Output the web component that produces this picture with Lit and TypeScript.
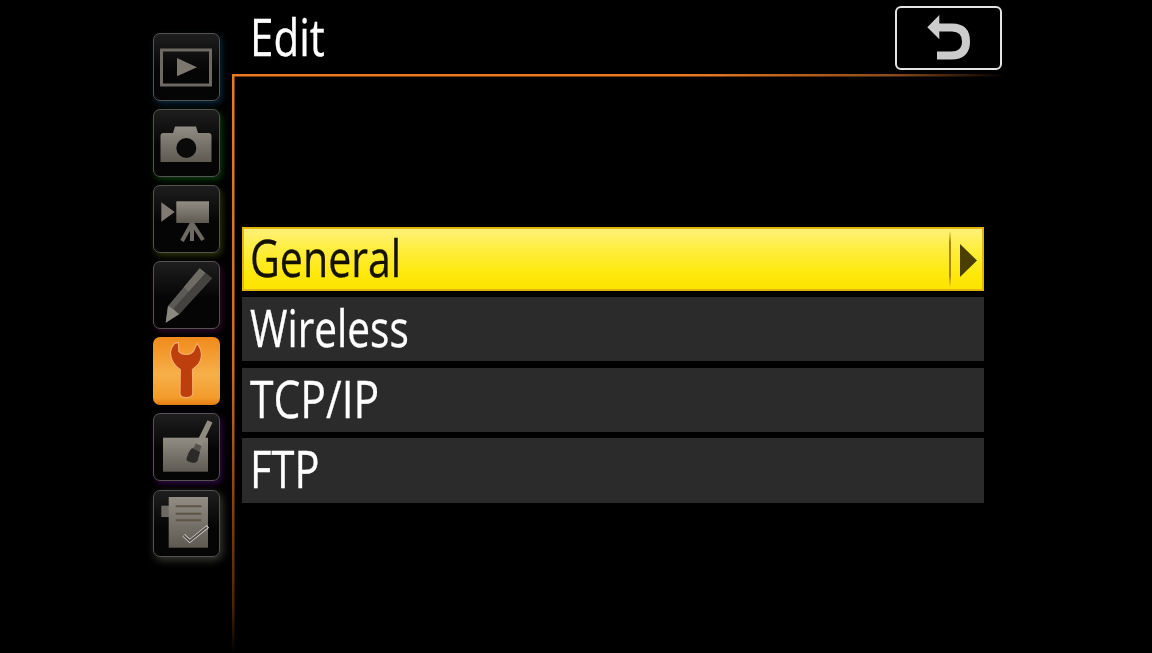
import { LitElement, html, css, svg } from "lit";
import { customElement } from "lit/decorators.js";

const G = "url(#g)";
const ICONS = [
  { cls: "blue", art: svg`<rect x="8.500" y="17" width="49" height="35" fill="none" stroke="#6e6a63" stroke-width="3"/><path d="M24 25 44 34.300 24 43.300Z" fill="#7c7870"/>` },
  { cls: "green", art: svg`<path d="M7.500 27a3 3 0 0 1 3-3H20l2-6.500h21l2 6.500h10.500a3 3 0 0 1 3 3V53H7.500Z" fill="${G}"/><circle cx="33.300" cy="39" r="10" fill="#0a0a0a"/>` },
  { cls: "olive", art: svg`<path d="M8.300 17.300 21.700 27 8.300 36.700Z" fill="#7f7b74"/><rect x="23.300" y="16.300" width="32.700" height="21.700" fill="${G}"/><path d="M39 38 29 56M39 38V56M39 38 50 55" stroke="#6e6a63" stroke-width="4" fill="none"/>` },
  { cls: "plum", art: svg`<path d="M12.700 61.700 15 45 46.700 7.300 59 17.300 26 53.300Z" fill="#5c5a56"/><path d="M31 26 46.700 7.300 52.500 12 36 31Z" fill="#6f6c66"/><path d="M20 48 52.500 12 59 17.300 26 53.300Z" fill="#45433f"/><path d="M12.700 61.700 15 45 20 48 26 53.300Z" fill="#8b8880"/>` },
  { cls: "active", art: svg`<path d="M21.700 6.300Q17.500 11 17.500 16 18 24 23.300 29.500L27.300 32.500 27 56.500Q27.200 60.500 33 60.700 39.500 60.500 39.800 56.500L39.500 32.500 43 29.500Q48.500 25 48.500 17 48 11 44 6.300L40.500 14.200Q38 17.500 33.300 17.500 28 17.500 25.800 14.200L25.500 5.500Z" fill="#bd3f0e" stroke="#f7ad6a" stroke-width="1.200"/>` },
  { cls: "purple", art: svg`<rect x="10" y="24.700" width="45" height="34" fill="${G}"/><path d="M54.500 7.300 59.500 9.500 48.500 33 43 30.500Z" fill="#8f8b80"/><path d="M43 30.500 48.500 33 46.500 39 40 36Z" fill="#55524c"/><path d="M39 35 47 39 44.500 48Q41 52.500 33.300 47.300 34.500 40 39 35Z" fill="#2b2a28"/>` },
  { cls: "grey", art: svg`<rect x="8.300" y="16.700" width="8" height="11.300" fill="#6e6a63"/><rect x="15.700" y="8" width="39.300" height="50.700" fill="${G}"/><path d="M22.700 17.300H48.300M22.700 24.700H48.300M22.700 31.300H48.300" stroke="#5e5446" stroke-width="2"/><path d="M30.700 46.300 36.700 52 55 37.300" fill="none" stroke="#cfcdc7" stroke-width="3.500"/><path d="M30.700 46.300 36.700 52 54 38" fill="none" stroke="#55524c" stroke-width="1.800"/>` },
];

@customElement("app-root")
export class AppRoot extends LitElement {
  static styles = css`
    :host { display: block; width: 1152px; height: 653px; overflow: hidden; background: #000; font-family: "Open Sans", "Noto Sans", sans-serif; }
    .screen { display: flex; height: 653px; filter: blur(.45px); }
    .rail { width: 79px; padding: 33px 0 0 153px; display: flex; flex-direction: column; gap: 8.500px; flex: none; }
    .tab { width: 67px; height: 67.600px; box-sizing: border-box; border-radius: 7px; border: 1.500px solid #55534f; background: linear-gradient(#1e1e1e, #050505 55%); position: relative; }
    .tab svg { position: absolute; left: -1.500px; top: -1.500px; width: 67px; height: 68px; }
    .blue { box-shadow: 2px 3px 6px #08263a; }
    .green { box-shadow: 2px 3px 6px #0c3a10; }
    .olive { box-shadow: 2px 3px 6px #2a3208; }
    .plum { box-shadow: 2px 3px 6px #2a0a26; }
    .purple { box-shadow: 2px 3px 6px #2c0a40; }
    .grey { box-shadow: 2px 3px 8px #3a3a36; }
    .active { border: none; background: linear-gradient(#f08a1c, #f6b04a 55%, #f39a2a 90%, #e07c14); }
    .active svg { left: 0; top: 0; }
    .main { flex: 1; display: flex; flex-direction: column; min-width: 0; }
    .head { height: 74px; flex: none; display: flex; justify-content: space-between; padding: 0 150px 0 18px; }
    .title, .label { font-size: 52px; line-height: 60px; display: inline-block; transform-origin: left center; white-space: nowrap; -webkit-text-stroke: .3px currentColor; }
    .title { color: #fff; line-height: 72px; transform: scaleX(.81); }
    .back { width: 107px; height: 64px; margin-top: 6px; box-sizing: border-box; border: 2px solid #e4e4e4; border-radius: 6px; position: relative; }
    .back svg { position: absolute; left: -2px; top: -2px; width: 107px; height: 64px; }
    .panel { flex: 1; padding: 152.600px 168px 0 10px; display: flex; flex-direction: column; gap: 6.300px;
      background-image: linear-gradient(90deg, #e87a24, #e87a24 50%, #8a4a18 72%, #000 84%), linear-gradient(#e87a24, #d06a20 50%, #4a2408 92%, #000);
      background-size: 100% 2.500px, 2.500px 100%; background-repeat: no-repeat; }
    .row { height: 64.300px; flex: none; box-sizing: border-box; background: #2b2b2b; color: #fff; padding-left: 8px; position: relative; }
    .row.sel { color: #141100; background: linear-gradient(#fff07a, #ffee44 30%, #fde910 70%, #fde400); border: 2px solid #e3b50c; padding-left: 6px; }
    .sel .label { margin-top: -2px; }
    .general { transform: scaleX(.79); }
    .wireless { transform: scaleX(.78); }
    .tcp { transform: scaleX(.82); }
    .ftp { transform: scaleX(.8); }
    .chev { position: absolute; right: 0; top: 0; bottom: 0; width: 33px; box-sizing: border-box; margin: 2px 0; }
    .sep { position: absolute; left: 0; top: 0; bottom: 0; width: 2px; background: linear-gradient(#e8c8000f, #a8860c 20%, #a8860c 80%, #e8c8000f); }
    .chev svg { position: absolute; left: 10.500px; top: 12px; width: 18px; height: 36px; }
  `;

  render() {
    return html`<div class="screen">
      <nav class="rail">
        ${ICONS.map((i) => html`<div class="tab ${i.cls}">
          <svg viewBox="0 0 67 68">
            <defs><linearGradient id="g" x1="0" y1="0" x2="0" y2="1"><stop offset="0" stop-color="#918d85"/><stop offset="1" stop-color="#5e5a52"/></linearGradient></defs>
            ${i.art}
          </svg>
        </div>`)}
      </nav>
      <div class="main">
        <header class="head">
          <span class="title">Edit</span>
          <div class="back"><svg viewBox="0 0 107 64">
            <path d="M32.300 21.300 44.300 9V33.300Z" fill="#ccc"/>
            <path d="M42 49.500H56Q71 49.500 71 35.500 71 21.500 57 21.500H42" fill="none" stroke="#ccc" stroke-width="8"/>
          </svg></div>
        </header>
        <section class="panel">
          <div class="row sel"><span class="label general">General</span>
            <div class="chev"><div class="sep"></div><svg viewBox="0 0 18 36"><path d="M0 1 17 17.500 0 34Z" fill="#4a3f00"/></svg></div>
          </div>
          <div class="row"><span class="label wireless">Wireless</span></div>
          <div class="row"><span class="label tcp">TCP/IP</span></div>
          <div class="row"><span class="label ftp">FTP</span></div>
        </section>
      </div>
    </div>`;
  }
}
